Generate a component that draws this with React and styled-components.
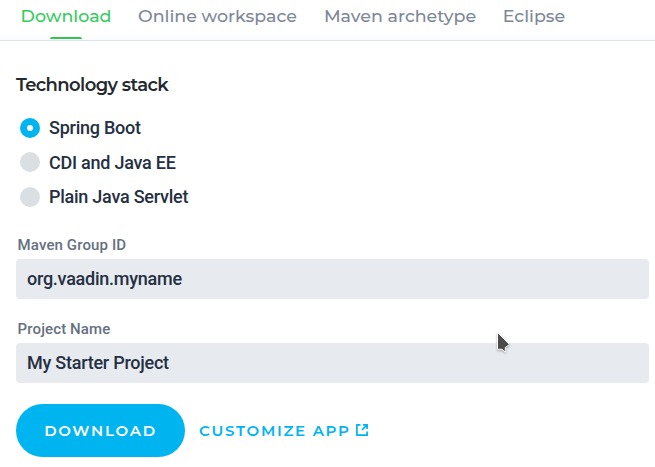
import React from 'react';
import styled, { createGlobalStyle } from 'styled-components';

const heading = 'Montserrat, "Open Sans", sans-serif';

const Global = createGlobalStyle`
  * { box-sizing: border-box; }
  body { margin: 0; background: #fff; overflow: hidden; font-family: Roboto, sans-serif; color: #243042; }
`;
const Page = styled.div`
  position: relative;
  width: 655px;
  height: 467px;
  overflow: hidden;
`;
const Tabs = styled.nav`
  display: flex;
  gap: 27px;
  height: 41px;
  padding-left: 21px;
  border-bottom: 1px solid #dce3ec;
  background: linear-gradient(#fff 34px, #fcfcfd);
`;
const Tab = styled.div`
  display: flex;
  flex-direction: column;
  align-items: center;
  width: ${p => p.$w}px;
  height: 40px;
  font: 500 17.45px/32px ${heading};
  white-space: nowrap;
  color: ${p => (p.$active ? '#35cb60' : '#7d8797')};
  &::after {
    content: '';
    display: ${p => (p.$active ? 'block' : 'none')};
    width: 32px;
    height: 2px;
    margin-top: 5px;
    border-radius: 2px 2px 0 0;
    background: #2fc456;
  }
`;
const Body = styled.main`
  padding: 29px 6px 0 16px;
`;
const Title = styled.h2`
  margin: 0;
  height: 30px;
  font: 600 18px/30px ${heading};
  letter-spacing: -0.6px;
  color: #24292e;
`;
const Radios = styled.div`
  padding: 10.5px 0 0 4px;
  height: 136px;
`;
const Radio = styled.label`
  display: flex;
  align-items: center;
  gap: 9px;
  height: 34.5px;
  font-size: 18px;
  font-weight: 500;
  line-height: 21px;
  letter-spacing: -0.25px;
`;
const Dot = styled.i`
  display: grid;
  place-items: center;
  width: 20px;
  height: 20px;
  border-radius: 50%;
  background: ${p => (p.$on ? '#00b4f0' : '#d9dfe3')};
  &::after {
    content: '';
    width: 6px;
    height: 6px;
    border-radius: 50%;
    background: ${p => (p.$on ? '#fff' : 'transparent')};
  }
`;
const Field = styled.label`
  display: block;
  height: 84px;
`;
const FieldName = styled.span`
  display: block;
  height: 23px;
  padding-left: 1.6px;
  font-size: 15px;
  font-weight: 500;
  line-height: 18px;
  letter-spacing: 0.12px;
  color: #657080;
`;
const Input = styled.div`
  height: 40px;
  padding-left: 11px;
  border-radius: 4px;
  background: #e7eaef;
  font-size: 18px;
  font-weight: 500;
  line-height: 40px;
  letter-spacing: -0.25px;
`;
const Actions = styled.div`
  display: flex;
  align-items: center;
  font: 600 15px/53px ${heading};
`;
const Download = styled.button`
  width: 169px;
  height: 53px;
  padding: 0;
  border: 0;
  border-radius: 27px;
  background: #00b4f0;
  color: #fff;
  font: 600 15px/53px ${heading};
  letter-spacing: 1.75px;
`;
const Customize = styled.a`
  display: flex;
  align-items: center;
  gap: 5px;
  margin-left: 14px;
  color: #00b4f0;
  letter-spacing: 1.7px;
`;
const ExternalIcon = styled.svg`
  margin-bottom: 1px;
`;
const Pointer = styled.svg`
  position: absolute;
  left: 496px;
  top: 330px;
  filter: drop-shadow(0 1px 1px rgba(0, 0, 0, 0.3));
`;

export default function App() {
  return (
    <Page>
      <Global />
      <Tabs>
        <Tab $active $w={90}>Download</Tab>
        <Tab $w={159}>Online workspace</Tab>
        <Tab $w={152}>Maven archetype</Tab>
        <Tab $w={62}>Eclipse</Tab>
      </Tabs>
      <Body>
        <Title>Technology stack</Title>
        <Radios>
          <Radio><Dot $on />Spring Boot</Radio>
          <Radio><Dot />CDI and Java EE</Radio>
          <Radio><Dot />Plain Java Servlet</Radio>
        </Radios>
        <Field><FieldName>Maven Group ID</FieldName><Input>org.vaadin.myname</Input></Field>
        <Field><FieldName>Project Name</FieldName><Input>My Starter Project</Input></Field>
        <Actions>
          <Download>DOWNLOAD</Download>
          <Customize>
            CUSTOMIZE APP
            <ExternalIcon width="12" height="12" viewBox="0 0 12 12" fill="none" stroke="currentColor" strokeWidth="1.7">
              <path d="M4.5 0.9H0.9V11.1H11.1V7.5M7 0.9H11.1V5M11.1 0.9L6 6" />
            </ExternalIcon>
          </Customize>
        </Actions>
      </Body>
      <Pointer width="16" height="24" viewBox="0 0 16 24">
        <path d="M1.5 2.5V19.3H6L9.3 22.3V17.5L13.5 14.5Z" fill="#4b4b4b" stroke="#fff" />
      </Pointer>
    </Page>
  );
}
